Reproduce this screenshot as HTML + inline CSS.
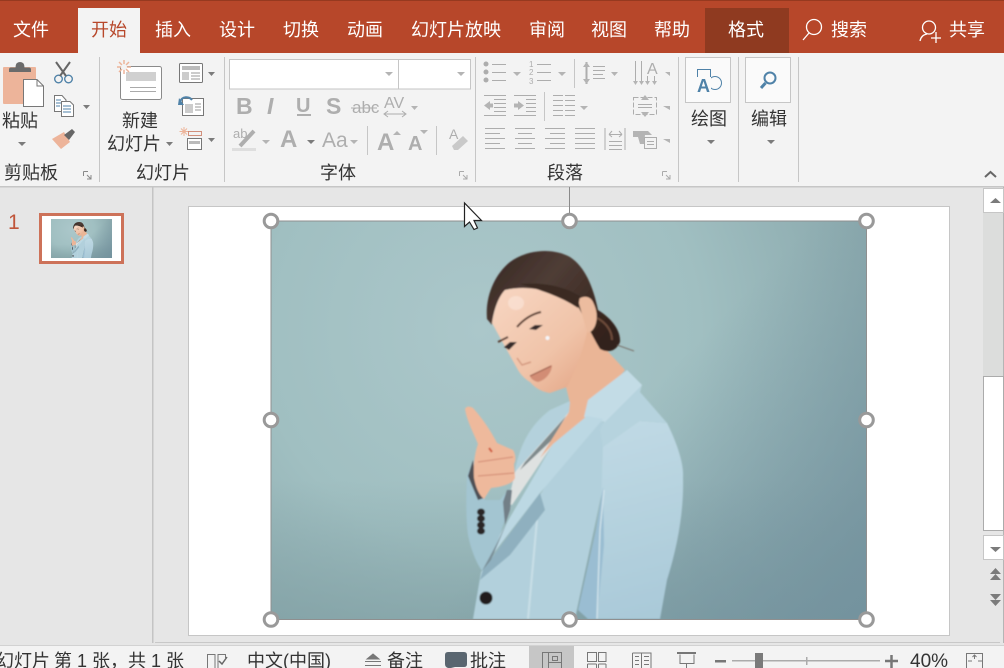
<!DOCTYPE html>
<html><head><meta charset="utf-8"><style>
html,body{margin:0;padding:0;width:1004px;height:668px;overflow:hidden;background:#e6e6e6}
svg{display:block}
text{font-family:"Liberation Sans","Noto Sans CJK SC",sans-serif}
.t{font-size:18px;fill:#fff}
.k{font-size:18px;fill:#333}
.g{fill:#aeaeae;font-weight:700}
.l{stroke:#adadad;stroke-width:1;fill:none}
.d{fill:#7b7b7b}
.a{fill:#b4b4b4}
</style></head><body>
<svg width="1004" height="668" viewBox="0 0 1004 668" xmlns="http://www.w3.org/2000/svg">
<defs>
<radialGradient id="bg" gradientUnits="userSpaceOnUse" cx="480" cy="330" r="440">
<stop offset="0" stop-color="#abc7ca"/><stop offset=".5" stop-color="#a0bfc1"/><stop offset="1" stop-color="#85a3a8"/></radialGradient>
<linearGradient id="br" gradientUnits="userSpaceOnUse" x1="640" y1="400" x2="866" y2="619"><stop offset="0" stop-color="#6f8e9c" stop-opacity="0"/><stop offset="1" stop-color="#6f8e9c" stop-opacity=".75"/></linearGradient>
<linearGradient id="bl" gradientUnits="userSpaceOnUse" x1="0" y1="480" x2="0" y2="619"><stop offset="0" stop-color="#7f9ea2" stop-opacity="0"/><stop offset="1" stop-color="#7f9ea2" stop-opacity=".6"/></linearGradient>
<linearGradient id="face" gradientUnits="userSpaceOnUse" x1="500" y1="300" x2="580" y2="390"><stop offset="0" stop-color="#f6d3be"/><stop offset=".6" stop-color="#f0c3a8"/><stop offset="1" stop-color="#e4a98a"/></linearGradient>
<linearGradient id="hair" gradientUnits="userSpaceOnUse" x1="500" y1="255" x2="600" y2="340"><stop offset="0" stop-color="#3a2a25"/><stop offset=".4" stop-color="#4f3d36"/><stop offset="1" stop-color="#33211a"/></linearGradient>
<linearGradient id="arm" gradientUnits="userSpaceOnUse" x1="610" y1="430" x2="660" y2="619"><stop offset="0" stop-color="#bfd9e4"/><stop offset="1" stop-color="#a9c9d8"/></linearGradient>
<filter id="b1" x="-5%" y="-5%" width="110%" height="110%"><feGaussianBlur stdDeviation=".9"/></filter>
<filter id="b3" x="-30%" y="-30%" width="160%" height="160%"><feGaussianBlur stdDeviation="3.500"/></filter>
<g id="photo">
<rect x="271" y="221" width="595" height="398" fill="url(#bg)"/>
<rect x="271" y="221" width="595" height="398" fill="url(#bl)"/>
<rect x="271" y="221" width="595" height="398" fill="url(#br)"/>
<g filter="url(#b1)">
<!-- left chest panel -->
<path d="M515 470C520 445 530 425 550 410L570 401 569 414 516 472Z" fill="#b4d1dc"/>
<!-- shirt -->
<path d="M569 412 553 444 512 505 508 503 515 472Z" fill="#dfe2e1"/>
<path d="M566 416 525 462 520 470 552 440Z" fill="#7f8a8c"/>
<!-- main body -->
<path d="M587 417 603 420 603 487 575 619H473L481 572 540 495Z" fill="#b2d0dc"/>
<!-- arm -->
<path d="M603 447C605 430 625 418 640 421L667 423C678 445 684 465 683 477 684 510 678 545 667 580L660 619H597Z" fill="url(#arm)"/>
<path d="M627 370 642 385 640 392 667 423 640 421 603 447 600 430Z" fill="#b6d3de"/>
<path d="M603 487 596 530 578 610 588 619 597 619 604 545Z" fill="#9abdd2"/>
<path d="M604 490 600 530 597 619" stroke="#cfe2ea" stroke-width="1.500" fill="none"/>
<path d="M537 520 528 619" stroke="#c9dfe7" stroke-width="2" fill="none"/>
<!-- neck and skin -->
<path d="M587 328 600 343 625 370 587 415 575 435 553 444 540 458 569 412 570 403 566 387 550 390Z" fill="#eab596"/>
<!-- lapel -->
<path d="M627 370 642 385 605 422 590 418 584 417 588 400Z" fill="#c3dce6"/>
<path d="M587 416 603 419 540 493 483 567 495 543 553 444Z" fill="#bcd8e3"/>
<path d="M540 493 483 570 480 580 510 555 545 510Z" fill="#8fb0bf"/>
<!-- sleeve -->
<path d="M473 460 467 476C466 500 466 520 468 535 471 550 476 562 482 571L497 543 510 505 508 490 500 500H485Z" fill="#a3c5d1"/>
<path d="M473 460 468 476 478 500 484 498 475 475Z" fill="#4e4f54"/>
<path d="M503 502 507 490 512 490 510 510 505 525Z" fill="#727f87"/>
<path d="M497 543 482 571 491 560 508 520Z" fill="#7a8f98"/>
<ellipse cx="481" cy="512" rx="4" ry="3.500" fill="#2a2628"/><ellipse cx="481" cy="518.500" rx="4" ry="3.500" fill="#2a2628"/><ellipse cx="481" cy="525" rx="4" ry="3.500" fill="#2a2628"/><ellipse cx="481" cy="531" rx="4" ry="3.500" fill="#2a2628"/>
<circle cx="486" cy="598" r="6.500" fill="#211b1b"/>
<!-- hand -->
<path d="M465 409C466 406 470 406 473 408 482 418 491 431 497 443L513 450C516 455 516 460 514 464L515 478C512 485 500 487 491 488L484 499C479 495 476 488 474 478 473 465 475 452 478 444 473 432 467 421 465 409Z" fill="#eeb99c"/>
<path d="M478 462 513 457M478 476 514 473" stroke="#d7937a" stroke-width="1.300" fill="none"/>
<path d="M489 448 492 452" stroke="#d0573a" stroke-width="2"/>
<!-- hair -->
<path d="M487 319C485 296 495 274 510 262 526 250 552 247 570 257 585 267 593 286 598 310 611 318 621 330 620 342 616 352 607 353 600 349 592 336 585 320 578 308 560 292 530 285 505 290 497 300 493 312 492 325Z" fill="url(#hair)"/>
<path d="M597 318C605 322 612 330 612 340" stroke="#6e4b3a" stroke-width="2" fill="none"/>
<path d="M617 345 634 351" stroke="#6b5a50" stroke-width=".8"/>
<!-- face -->
<path d="M492 323C495 305 500 295 505 290 530 284 560 292 577 305 585 318 588 326 587 332 583 350 575 372 567 387L550 393C544 392 537 390 530 382 525 379 521 375 518 370L503 343Z" fill="url(#face)"/>
<path d="M578 300C583 295 590 296 593 302 597 310 598 318 595 326 592 332 589 333 587 332Z" fill="#ecbc9f"/>
<path d="M580 296C565 287 545 282 520 284 540 290 560 296 578 308Z" fill="#3a2a24"/>
<ellipse cx="516" cy="303" rx="8" ry="7" fill="#fae2d4" opacity=".75"/>
<path d="M517 327C524 319 532 314 541 312" stroke="#5a3e32" stroke-width="2" fill="none"/>
<path d="M498 342 508 337" stroke="#5a3e32" stroke-width="2" fill="none"/>
<path d="M529 329 535 325 543 325 536 330Z" fill="#352a2a"/>
<path d="M504 347 510 342 517 342 509 350Z" fill="#352a2a"/>
<path d="M530 376C537 372 546 368 552 365 552 372 546 380 538 382 534 381 531 379 530 376Z" fill="#d28d74"/>
<path d="M530 376 551 366" stroke="#9a5a48" stroke-width="1"/>
<path d="M517 358 522 365 531 362" stroke="#d49a80" stroke-width="1.500" fill="none"/>
<circle cx="547.500" cy="338" r="2" fill="#f4f6fa"/>
</g>
</g>
</defs>

<!-- base -->
<rect width="1004" height="668" fill="#e6e6e6"/>
<rect width="1004" height="53" fill="#b7472a"/>
<rect width="1004" height="1" fill="#96391f"/>
<rect y="53" width="1004" height="133" fill="#f3f3f3"/>
<rect y="186" width="1004" height="1.500" fill="#c6c6c6"/>
<rect x="78" y="8" width="62" height="45" fill="#f3f3f3"/>
<rect x="705" y="8" width="84" height="45" fill="#8f3a20"/>

<!-- tabs -->
<text class="t" x="13" y="36">文件</text>
<text class="t" x="91" y="36" style="fill:#b7472a">开始</text>
<text class="t" x="155" y="36">插入</text>
<text class="t" x="219" y="36">设计</text>
<text class="t" x="283" y="36">切换</text>
<text class="t" x="347" y="36">动画</text>
<text class="t" x="411" y="36">幻灯片放映</text>
<text class="t" x="529" y="36">审阅</text>
<text class="t" x="591" y="36">视图</text>
<text class="t" x="654" y="36">帮助</text>
<text class="t" x="728" y="36">格式</text>
<text class="t" x="831" y="36">搜索</text>
<text class="t" x="949" y="36">共享</text>
<g fill="none" stroke="#fff" stroke-width="1.300">
<circle cx="814" cy="27" r="7.500"/><path d="M809 33 803 40"/>
<circle cx="929" cy="27.500" r="6.500"/><path d="M920 41C921 36 924 34.500 927 34M936 32V43M931 38H941"/>
</g>

<!-- separators -->
<g stroke="#c6c6c6" stroke-width="1">
<path d="M99.500 57V182M224.500 57V182M475.500 57V182M678.500 57V182M738.500 57V182M798.500 57V182"/>
<path d="M574.500 59V88M544.500 92V121M367.500 126V155M436.500 126V155"/>
</g>

<!-- paste -->
<rect x="3" y="67" width="33" height="37" rx="1" fill="#edb49a"/>
<path d="M9 72V69.500Q9 67.500 11 67.500H15.500Q15.500 62 20 62 24.500 62 24.500 67.500H29Q31 67.500 31 69.500V72Z" fill="#6b6b6b"/>
<path d="M23.500 79.500H37L43.500 86V106.500H23.500Z" fill="#fff" stroke="#777"/>
<path d="M37 80V86H43" fill="none" stroke="#777"/>
<text class="k" x="2" y="127">粘贴</text>
<path class="d" d="M18 142H26L22 146Z"/>
<!-- scissors -->
<g fill="none"><circle cx="58.500" cy="79" r="3.800" stroke="#4f82a8" stroke-width="1.400"/><circle cx="68.500" cy="79" r="3.800" stroke="#4f82a8" stroke-width="1.400"/>
<path d="M56 62 66 76M70 62 60 76" stroke="#666" stroke-width="2"/></g>
<!-- copy -->
<g fill="#fff" stroke="#777"><path d="M54.500 95.500H62L66 100V111.500H54.500Z"/><path d="M61.500 101.500H70L73.500 105V116.500H61.500Z"/></g>
<path d="M56 100H61M56 103H61M56 106H60M63 106H71M63 109H71M63 112H71" stroke="#4f82a8" fill="none"/>
<path class="d" d="M83 105H90L86.500 109Z"/>
<!-- painter -->
<path d="M52 139 64 132 70 142 61 149Z" fill="#edb49a"/>
<path d="M64 135 72 129 75 132 69 140Z" fill="#666"/>
<text class="k" x="4" y="179">剪贴板</text>
<path d="M83.500 171.500H88M83.500 171.500V176M87 175 91 179M91 175V179H87" stroke="#888" fill="none"/>

<!-- new slide -->
<rect x="120.500" y="66.500" width="41" height="33" rx="2" fill="#fff" stroke="#8a8a8a"/>
<rect x="126" y="72" width="30" height="9" fill="#d0d0d0"/>
<path d="M130 87.500H156M130 91.500H156" stroke="#aaa"/>
<g stroke="#edb49a" stroke-width="1.500"><path d="M124 60V74M117 67H131M119 62 129 72M129 62 119 72"/></g>
<circle cx="124" cy="67" r="3" fill="#f3f3f3"/>
<text class="k" x="122" y="127">新建</text>
<text class="k" x="107" y="150">幻灯片</text>
<path class="d" d="M166 142H173L169.500 146Z"/>
<!-- layout -->
<rect x="179.500" y="63.500" width="23" height="19" rx="1" fill="#fff" stroke="#777"/>
<rect x="182" y="66" width="18" height="4" fill="#bbb"/><rect x="182" y="72" width="7" height="8" fill="#ccc"/>
<path d="M191 73H200M191 76H200M191 79H200" stroke="#999"/>
<path class="d" d="M208 72H215L211.500 76Z"/>
<!-- reset -->
<rect x="182.500" y="98.500" width="21" height="17" fill="#fff" stroke="#777"/>
<rect x="185" y="104" width="8" height="9" fill="#ccc"/><path d="M195 104H201M195 107H201M195 110H201" stroke="#999"/>
<path d="M180 102C182 96 189 96 192 100" fill="none" stroke="#4f82a8" stroke-width="2"/><path d="M179 98 184 105H178Z" fill="#4f82a8"/>
<!-- section -->
<g stroke="#edb49a"><path d="M184 127V136M179.500 131.500H188.500M181 128.500 187 134.500M187 128.500 181 134.500"/></g>
<rect x="188.500" y="131.500" width="13" height="4" fill="none" stroke="#c9785f" stroke-width=".8"/>
<rect x="187.500" y="138.500" width="14" height="11" fill="#fff" stroke="#777"/><rect x="189" y="141" width="11" height="3" fill="#bbb"/>
<path class="d" d="M208 138H215L211.500 142Z"/>
<text class="k" x="136" y="179">幻灯片</text>

<!-- font -->
<rect x="229.500" y="59.500" width="169" height="29.500" fill="#fff" stroke="#c6c6c6"/>
<rect x="398.500" y="59.500" width="72" height="29.500" fill="#fff" stroke="#c6c6c6"/>
<path class="a" d="M385 72H393L389 76ZM457 72H465L461 76Z"/>
<text class="g" x="236" y="114" font-size="23">B</text>
<text class="g" x="267" y="114" font-size="23" font-style="italic">I</text>
<text class="g" x="296" y="112" font-size="20">U</text><rect x="297" y="114" width="14" height="2" fill="#aeaeae"/>
<text class="g" x="326" y="114" font-size="23">S</text>
<text x="352" y="113" font-size="17" fill="#aeaeae">abc</text><path d="M351 108H377" stroke="#aeaeae"/>
<text class="g" x="384" y="108" font-size="16" style="font-weight:400">AV</text>
<path d="M385 114H405M388 111 384 114 388 117M402 111 406 114 402 117" class="l"/>
<path class="a" d="M411 106H418L414.500 110Z"/>
<text x="233" y="138" font-size="13" fill="#aeaeae">ab</text>
<path d="M240 146 254 131" stroke="#aeaeae" stroke-width="4"/><rect x="232" y="148" width="24" height="3" fill="#dedede"/>
<path class="a" d="M262 140H270L266 144Z"/>
<text x="280" y="147" font-size="24" fill="#aeaeae" font-weight="700">A</text>
<path class="d" d="M307 140H315L311 144Z"/>
<text x="322" y="147" font-size="21" fill="#aeaeae">Aa</text>
<path class="a" d="M350 140H358L354 144Z"/>
<text x="377" y="150" font-size="24" fill="#aeaeae" font-weight="700">A</text><path class="a" d="M393 135 397 131 401 135Z"/>
<text x="408" y="150" font-size="20" fill="#aeaeae" font-weight="700">A</text><path class="a" d="M420 130H428L424 134Z"/>
<text x="449" y="139" font-size="14" fill="#aeaeae">A</text>
<path d="M452 146 463 136 468 141 458 150 454 150Z" fill="#c9c9c9"/>
<text class="k" x="320" y="179">字体</text>
<path d="M459.500 171.500H464M459.500 171.500V176M463 175 467 179M467 175V179H463" stroke="#aaa" fill="none"/>

<!-- paragraph -->
<g fill="#adadad"><circle cx="486" cy="64" r="2.500"/><circle cx="486" cy="72" r="2.500"/><circle cx="486" cy="80" r="2.500"/></g>
<path class="l" d="M492 64.500H506M492 72.500H506M492 80.500H506"/>
<path class="a" d="M513 72H521L517 76Z"/>
<g font-size="8" fill="#adadad"><text x="529" y="67">1</text><text x="529" y="75">2</text><text x="529" y="84">3</text></g>
<path class="l" d="M537 64.500H551M537 72.500H551M537 80.500H551"/>
<path class="a" d="M558 72H566L562 76Z"/>
<path class="l" d="M593 66.500H605M593 70.500H605M593 74.500H603M593 78.500H605"/>
<path d="M586.500 62V84" stroke="#adadad" stroke-width="2"/><path class="a" d="M583 67 586.500 62 590 67ZM583 79 586.500 84 590 79Z"/>
<path class="a" d="M611 72H618L614.500 76Z"/>
<path d="M635.500 61V83M641.500 61V83M647.500 76V83M654.500 76V83" class="l"/>
<path class="a" d="M633 81H638L635.500 85ZM639 81H644L641.500 85ZM645 81H650L647.500 85ZM652 81H657L654.500 85Z"/>
<text x="647" y="74" font-size="16" fill="#adadad">A</text>
<path class="a" d="M665 72H670V76Z"/>

<g class="l"><path d="M484 95.500H506M494 99.500H506M494 103.500H506M494 107.500H506M494 111.500H506M484 115.500H506"/>
<path d="M514 95.500H536M526 99.500H536M526 103.500H536M526 107.500H536M526 111.500H536M514 115.500H536"/>
<path d="M553 95.500H575M553 100.500H575M553 105.500H575M553 110.500H575M553 115.500H575"/></g>
<path class="a" d="M484 105.500 490 101V103.500H493V107.500H490V110ZM524 105.500 518 101V103.500H514V107.500H518V110Z"/>
<path d="M564 94V117" stroke="#f3f3f3" stroke-width="2"/>
<path class="a" d="M580 106H588L584 110Z"/>
<rect x="633.500" y="97.500" width="23" height="17" fill="none" stroke="#adadad" stroke-dasharray="5 2"/>
<path class="l" d="M638 104.500H652M638 107.500H652"/>
<path class="a" d="M641 100 645 95 649 100ZM641 112 645 117 649 112ZM663 106H670V110Z"/>

<path class="l" d="M485 128.500H505M485 133.500H500M485 138.500H505M485 143.500H500M485 148.500H505"/>
<path class="l" d="M515 128.500H535M518 133.500H532M515 138.500H535M518 143.500H532M515 148.500H535"/>
<path class="l" d="M545 128.500H565M550 133.500H565M545 138.500H565M550 143.500H565M545 148.500H565"/>
<path class="l" d="M575 128.500H595M575 133.500H595M575 138.500H595M575 143.500H595M575 148.500H595"/>
<path class="l" d="M605 128V150M625 128V150M609 134.500H622M609 141.500H622M609 145.500H622M609 149.500H622M609 134.500 612 131M609 134.500 612 137M622 134.500 619 131M622 134.500 619 137"/>
<path class="a" d="M633 131H648L652 135H645L644 144H640L638 137H633Z"/>
<rect x="644.500" y="137.500" width="12" height="11" fill="#f3f3f3" stroke="#adadad"/><path class="l" d="M647 141.500H654M647 144.500H654"/>
<path class="a" d="M663 139H670V143Z"/>
<text class="k" x="547" y="179">段落</text>
<path d="M662.500 171.500H667M662.500 171.500V176M666 175 670 179M670 175V179H666" stroke="#aaa" fill="none"/>

<!-- draw / edit -->
<rect x="685.500" y="57.500" width="45" height="45" fill="#fafafa" stroke="#c6c6c6"/>
<rect x="745.500" y="57.500" width="45" height="45" fill="#fafafa" stroke="#c6c6c6"/>
<path d="M697.500 81V69.500H710.500V78" fill="none" stroke="#4f82a8"/>
<circle cx="715" cy="83" r="6.500" fill="none" stroke="#4f82a8"/>
<rect x="696" y="77" width="15" height="16" fill="#fafafa"/>
<text x="697" y="92" font-size="18" font-weight="700" fill="#4f82a8">A</text>
<circle cx="770" cy="78" r="5.500" fill="none" stroke="#4f82a8" stroke-width="2"/><path d="M765.500 83 761 88" stroke="#4f82a8" stroke-width="3"/>
<text class="k" x="691" y="125">绘图</text>
<text class="k" x="751" y="125">编辑</text>
<path class="d" d="M707 140H715L711 144ZM767 140H775L771 144Z"/>
<path d="M985 177 990.500 172 996 177" fill="none" stroke="#666" stroke-width="2"/>

<!-- panes -->
<rect x="152" y="187" width="1.500" height="456" fill="#c4c4c4"/>
<text x="8" y="229" font-size="21" fill="#c0553a">1</text>
<rect x="40.500" y="214.500" width="82" height="48" fill="#fff" stroke="#cd7259" stroke-width="3"/>
<g transform="translate(51 219) scale(.1025 .098) translate(-271 -221)"><use href="#photo"/></g>

<!-- slide -->
<rect x="188.500" y="206.500" width="761" height="429" fill="#fff" stroke="#c6c6c6"/>
<use href="#photo"/>
<rect x="271" y="221" width="595.500" height="398.500" fill="none" stroke="#8f8f8f"/>
<path d="M569.500 187V214" stroke="#8a8a8a"/>
<g fill="#fff" stroke="#999" stroke-width="3">
<circle cx="271" cy="221" r="6.800"/><circle cx="569.500" cy="221" r="6.800"/><circle cx="866.500" cy="221" r="6.800"/>
<circle cx="271" cy="420" r="6.800"/><circle cx="866.500" cy="420" r="6.800"/>
<circle cx="271" cy="619.500" r="6.800"/><circle cx="569.500" cy="619.500" r="6.800"/><circle cx="866.500" cy="619.500" r="6.800"/>
</g>
<path d="M464.500 203V226.500L469.500 222 474 229.500 477.500 228 474 220.500H481.500Z" fill="#fff" stroke="#222" stroke-width="1.200"/>

<!-- scrollbar -->
<rect x="983" y="212" width="21" height="165" fill="#dcdddc"/>
<rect x="1003" y="187" width="1" height="456" fill="#b5b5b5"/>
<rect x="983.500" y="188.500" width="20" height="24" fill="#fff" stroke="#c6c6c6"/>
<rect x="983.500" y="376.500" width="20" height="154" fill="#fff" stroke="#ababab"/>
<rect x="983.500" y="535.500" width="20" height="24" fill="#fff" stroke="#c6c6c6"/>
<path class="d" d="M990 203 995.500 198 1001 203ZM990 547H1001L995.500 552ZM990 574 995.500 568 1001 574ZM990 580 995.500 574 1001 580ZM990 594H1001L995.500 600ZM990 600H1001L995.500 606Z"/>

<!-- status -->
<rect x="155" y="642" width="845" height="1" fill="#c8c8c8"/>
<rect y="645" width="1004" height="23" fill="#f3f3f3"/>
<rect y="645" width="1004" height="1" fill="#d2d2d2"/>
<rect x="529" y="646" width="45" height="22" fill="#c6c6c6"/>
<text class="k" x="-4" y="667">幻灯片</text>
<text class="k" x="54" y="667" xml:space="preserve">第 1 张，共 1 张</text>
<text class="k" x="247" y="667">中文(中国)</text>
<text class="k" x="387" y="667">备注</text>
<text class="k" x="470" y="667">批注</text>
<text class="k" x="910" y="667" style="font-size:19px">40%</text>
<path d="M207.500 668V654.500H215V668M218 668V654.500H225.500V658" fill="none" stroke="#777"/>
<path d="M219 661 222 664 227 657" fill="none" stroke="#666" stroke-width="1.500"/>
<path d="M373 654 379 659H367ZM365 661.500H381M365 665.500H381" fill="#777" stroke="#777"/>
<path d="M448 652H464Q467 652 467 655V664Q467 667 464 667H455L451 668H448Q445 667 445 664V655Q445 652 448 652Z" fill="#5a6670"/>
<path d="M542.500 668V652.500H561.500V668M548.500 652.500V668M548.500 662.500H561.500" fill="none" stroke="#777"/><rect x="552.500" y="656.500" width="5" height="4" fill="none" stroke="#777"/>
<g fill="none" stroke="#777"><path d="M587.500 652.500H596.500V661.500H587.500ZM598.500 652.500H606V661.500H598.500ZM587.500 664V668M596.500 664V668M598.500 664V668M606 664V668M587.500 664H596.500M598.500 664H606"/>
<path d="M632.500 653H651V668M632.500 653V668M641.500 653V668M635 656.500H639M635 660.500H639M635 664.500H639M644 656.500H649M644 660.500H649M644 664.500H649"/>
<path d="M680 654.500V663.500H694V654.500M686.500 663.500V668"/></g>
<rect x="677" y="652" width="19" height="2" fill="#777"/>
<rect x="715" y="660" width="11" height="2.500" fill="#777"/>
<rect x="732" y="660" width="148" height="1.500" fill="#ababab"/>
<rect x="806" y="657" width="1.500" height="8" fill="#ababab"/>
<rect x="755" y="653" width="8" height="15" fill="#7a7a7a"/>
<path d="M885 661H898M891.500 655V668" stroke="#777" stroke-width="2.500"/>
<path d="M966.500 668V653.500H982.500V668M974.500 655V659M972.500 657 974.500 655 976.500 657M968 661H972M978 661H982" fill="none" stroke="#777"/>
</svg>
</body></html>
